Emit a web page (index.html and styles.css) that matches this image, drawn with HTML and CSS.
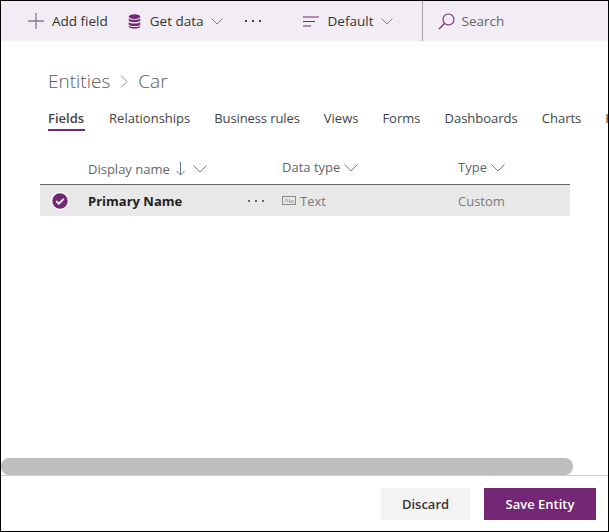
FILE: index.html
```html
<!DOCTYPE html>
<html>
<head>
    <title>Car - Fields</title>
    <link rel="stylesheet" href="styles.css">
</head>
<body>
<div class="frame">
    <div class="toolbar">
        <div class="tool tool-add">
            <svg width="16" height="16" viewBox="0 0 16 16"><path d="M8 0v16M0 8h16" stroke="#857a96" stroke-width="1.300" fill="none"/></svg>
            <span>Add field</span>
        </div>
        <div class="tool tool-data">
            <svg width="13" height="15" viewBox="0 0 13 15"><ellipse cx="6.500" cy="2.600" rx="5.800" ry="2.400" fill="#742774"/><path d="M.7 4.200c1 2 10.600 2 11.600 0v2.400c-1 2.200-10.600 2.200-11.600 0zM.7 8c1 2 10.600 2 11.600 0v2.400c-1 2.200-10.600 2.200-11.600 0zM.7 11.600c1 2 10.600 2 11.600 0v.8c-.6 2.800-11 2.800-11.600 0z" fill="#742774"/></svg>
            <span>Get data</span>
            <svg class="chev" width="12" height="7" viewBox="0 0 12 7"><path d="M.5.500 6 6 11.500.500" stroke="#7d7d8c" fill="none"/></svg>
        </div>
        <div class="tool-more">
            <i></i><i></i><i></i>
        </div>
        <div class="tool tool-view">
            <svg width="16" height="11" viewBox="0 0 16 11"><path d="M0 1h16M0 5.500h12M0 10h8" stroke="#742774" stroke-width="1.100" fill="none"/></svg>
            <span>Default</span>
            <svg class="chev" width="12" height="7" viewBox="0 0 12 7"><path d="M.5.500 6 6 11.500.500" stroke="#7d7d8c" fill="none"/></svg>
        </div>
        <div class="tool tool-search">
            <svg width="17" height="17" viewBox="0 0 17 17"><circle cx="10.500" cy="6.500" r="5.500" stroke="#742774" stroke-width="1.100" fill="none"/><path d="M6.500 10.500 1 16" stroke="#742774" stroke-width="1.200" fill="none"/></svg>
            <span>Search</span>
        </div>
    </div>

    <div class="content">
        <div class="crumbs">
            <span>Entities</span>
            <svg width="8" height="13" viewBox="0 0 8 13"><path d="M1 .5 7 6.500 1 12.500" stroke="#8c8c8c" fill="none"/></svg>
            <span>Car</span>
        </div>

        <div class="tabs">
            <span class="tab tab-active">Fields</span>
            <span class="tab">Relationships</span>
            <span class="tab tab-tight">Business rules</span>
            <span class="tab">Views</span>
            <span class="tab">Forms</span>
            <span class="tab">Dashboards</span>
            <span class="tab">Charts</span>
            <span class="tab">Keys</span>
        </div>

        <div class="grid">
            <div class="grid-head">
                <div class="col-name head-name">
                    <span>Display name</span>
                    <svg class="arrow" width="9" height="14" viewBox="0 0 9 14"><path d="M4.500 0v13M.5 9l4 4 4-4" stroke="#5f7690" fill="none"/></svg>
                    <svg class="chev" width="14" height="8" viewBox="0 0 14 8"><path d="M.5.500 7 7 13.500.500" stroke="#6f7f93" fill="none"/></svg>
                </div>
                <div class="col-type">
                    <span>Data type</span>
                    <svg class="chev" width="14" height="8" viewBox="0 0 14 8"><path d="M.5.500 7 7 13.500.500" stroke="#6f7f93" fill="none"/></svg>
                </div>
                <div class="col-kind">
                    <span>Type</span>
                    <svg class="chev" width="14" height="8" viewBox="0 0 14 8"><path d="M.5.500 7 7 13.500.500" stroke="#6f7f93" fill="none"/></svg>
                </div>
            </div>
            <div class="grid-row">
                <div class="col-check">
                    <svg width="18" height="18" viewBox="0 0 18 18"><circle cx="9" cy="9" r="9" fill="#fff"/><circle cx="9" cy="9" r="7.700" fill="#742774"/><path d="M5.200 9.200 7.800 11.700 12.800 6.800" stroke="#fff" stroke-width="1.800" fill="none"/></svg>
                </div>
                <div class="col-name cell-name">
                    <b>Primary Name</b>
                    <div class="row-more"><i></i><i></i><i></i></div>
                </div>
                <div class="col-type cell-type">
                    <svg width="14" height="9" viewBox="0 0 14 9"><rect x=".5" y=".5" width="13" height="8" fill="none" stroke="#8c8c8c"/><path d="M3 6.500 4.500 2.500 6 6.500M7.500 2.500v4M7.500 5h2v1.500h-2M12 4.500h-1.300v2H12" stroke="#8c8c8c" stroke-width=".6" fill="none"/></svg>
                    <span>Text</span>
                </div>
                <div class="col-kind cell-kind">Custom</div>
            </div>
        </div>
    </div>

    <div class="scroll-track"><div class="scroll-thumb"></div></div>

    <div class="footer">
        <button type="button" class="btn btn-plain">Discard</button>
        <button type="button" class="btn btn-save">Save Entity</button>
    </div>
</div>
</body>
</html>
```

FILE: styles.css
```css
/* General body styles */
body {
    margin: 0;
    font-family: 'Open Sans', 'Noto Sans', sans-serif;
    font-size: 13px;
    color: #333;
    background-color: #fff;
}

.frame {
    width: 609px;
    height: 532px;
    box-sizing: border-box;
    border: 1px solid #000;
    display: flex;
    flex-direction: column;
    overflow: hidden;
}

/* Top command bar */
.toolbar {
    height: 40px;
    flex: none;
    display: flex;
    align-items: center;
    background-color: #f2edf4;
    color: #333;
    font-size: 13.5px;
}

.tool {
    display: flex;
    align-items: center;
}

.tool-add {
    margin-left: 27px;
    gap: 8px;
}

.tool-data {
    margin-left: 20px;
    gap: 9px;
}

.tool-data .chev {
    margin-left: -2px;
}

.tool-more {
    display: flex;
    gap: 5px;
    margin-left: 22px;
}

.tool-more i,
.row-more i {
    display: block;
    width: 2px;
    height: 2px;
    background-color: #444;
}

.tool-view {
    margin-left: 42px;
    gap: 9px;
    height: 100%;
    width: 119px;
    border-right: 1px solid #a8a8a8;
}

.tool-view .chev {
    margin-left: -1px;
}

.tool-search {
    margin-left: 15px;
    gap: 7px;
    color: #666;
}

/* Page title */
.content {
    flex: 1;
    min-height: 0;
    overflow: hidden;
}

.crumbs {
    display: flex;
    align-items: center;
    gap: 10px;
    margin: 25px 0 0 47px;
    font-size: 19px;
    font-weight: 300;
    line-height: 30px;
    color: #5c5c5c;
}

/* Tabs */
.tabs {
    display: flex;
    gap: 24px;
    margin: 11px 0 0 47px;
    white-space: nowrap;
}

.tab {
    height: 24px;
    line-height: 22px;
    box-sizing: border-box;
    color: #444;
}

.tab-tight {
    letter-spacing: -.1px;
}

.tab-active {
    font-weight: 600;
    padding-right: 1px;
    border-bottom: 2px solid #742774;
}

/* Fields grid */
.grid {
    width: 530px;
    margin: 19px 0 0 39px;
}

.grid-head {
    height: 35px;
    box-sizing: border-box;
    padding-left: 48px;
    display: flex;
    align-items: center;
    border-bottom: 1px solid #666;
    color: #666;
}

.col-name {
    width: 194px;
    flex: none;
    display: flex;
    align-items: center;
}

.col-type {
    width: 176px;
    flex: none;
    display: flex;
    align-items: center;
}

.col-kind {
    display: flex;
    align-items: center;
}

.head-name {
    padding-top: 3px;
}

.head-name .arrow {
    margin-left: 6px;
}

.head-name .chev {
    margin-left: 8px;
}

.col-type .chev,
.col-kind .chev {
    margin-left: 4px;
    margin-top: 2px;
}

.grid-row {
    height: 31px;
    display: flex;
    align-items: center;
    background-color: #e8e8e8;
}

.col-check {
    width: 48px;
    flex: none;
    display: flex;
    justify-content: center;
    padding-right: 8px;
    box-sizing: border-box;
}

.cell-name b {
    font-weight: 700;
    color: #222;
    width: 160px;
}

.row-more {
    display: flex;
    gap: 5px;
}

.row-more i {
    background-color: #666;
}

.cell-type {
    gap: 4px;
    color: #7a7a7a;
}

.cell-kind {
    color: #7a7a7a;
}

/* Horizontal scrollbar */
.scroll-track {
    height: 18px;
    flex: none;
    box-sizing: border-box;
    border-bottom: 1px solid #ccc;
}

.scroll-thumb {
    width: 572px;
    height: 17px;
    background-color: #bebebe;
    border-radius: 8px;
}

/* Footer with buttons */
.footer {
    flex: none;
    height: 55px;
    box-sizing: border-box;
    padding: 12px 12px 0 0;
    display: flex;
    justify-content: flex-end;
    gap: 14px;
}

.btn {
    height: 32px;
    border: none;
    padding: 0;
    font-family: inherit;
    font-size: 13px;
    font-weight: 600;
}

.btn-plain {
    width: 89px;
    background-color: #f3f3f3;
    color: #333;
}

.btn-save {
    width: 112px;
    background-color: #742774;
    color: #fff;
}
```
